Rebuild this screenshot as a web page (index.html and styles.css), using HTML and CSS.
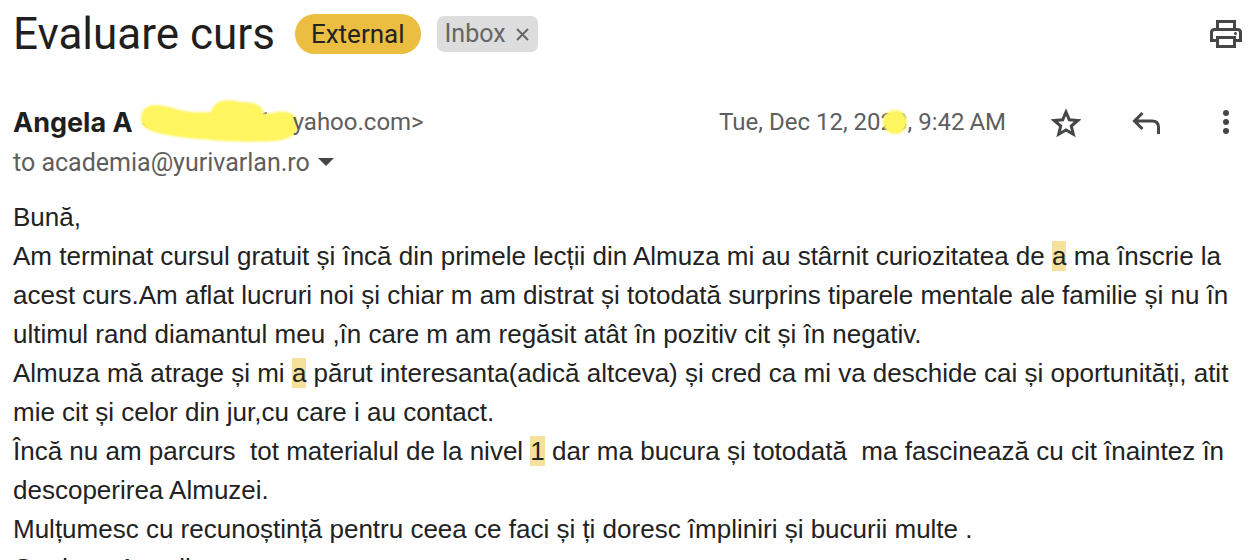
FILE: index.html
```html
<!DOCTYPE html>
<html lang="ro">
<head>
    <meta charset="UTF-8">
    <meta name="viewport" content="width=device-width, initial-scale=1.0">
    <title>Evaluare curs</title>
    <link rel="stylesheet" href="styles.css">
</head>
<body>
    <main class="message">
        <header class="subject-row">
            <h1 class="subject">Evaluare curs</h1>
            <span class="badge-external">External</span>
            <span class="badge-inbox">Inbox
                <button class="remove-btn" aria-label="Remove label Inbox">
                    <svg width="14" height="14" viewBox="0 0 14 14"><path d="M1 2l11 11M12 2L1 13" stroke="#666" stroke-width="2"/></svg>
                </button>
            </span>
            <button class="icon-btn print-btn" aria-label="Print all">
                <svg width="32" height="28" viewBox="0 0 32 28" fill="none" stroke="#444746" stroke-width="3">
                    <path d="M7.500 9V1.500h17V9"/>
                    <path d="M7.500 20.500h-6v-8q0-3 3-3h23q3 0 3 3v8h-6"/>
                    <path d="M7.500 17.500h17v9h-17z"/>
                    <circle cx="25.500" cy="13.500" r="1.500" fill="#444746" stroke="none"/>
                </svg>
            </button>
        </header>

        <section class="sender-row">
            <div class="sender">
                <span class="sender-name">Angela A</span>
                <!-- hidden part of the address -->
                <svg class="marker" width="160" height="44" viewBox="0 0 160 44">
                    <path d="M2 23l5 4M122 14l4-1" stroke="#5e5e5e" stroke-width="2" fill="none"/>
                    <path class="marker-shape" d="M14 5C5 5 0 11 0 19c0 9 9 13 26 16 16 3 32 4 44 5 18 2 48 2 63 1 16-1 24-7 24-17 0-9-10-14-20-12l-14 2c-2-9-8-12-24-12-14-4-26-2-29 10-18 1-30-1-38-4C24 6 19 5 14 5z" fill="#fff55f"/>
                </svg>
                <span class="sender-mail">yahoo.com&gt;</span>
            </div>
            <div class="actions">
                <span class="date">Tue, Dec 12, 20<span class="year">23<i class="dot"></i></span>, 9:42&#8201;AM</span>
                <button class="icon-btn" aria-label="Star">
                    <svg width="30" height="32" viewBox="0 0 30 32" fill="none" stroke="#444746" stroke-width="3"><path d="M15 6l3.300 7.800 8.400.7-6.400 5.500 2 8.200L15 23.900l-7.300 4.300 2-8.200-6.400-5.500 8.400-.7z"/></svg>
                </button>
                <button class="icon-btn" aria-label="Reply">
                    <svg width="30" height="30" viewBox="0 0 30 30" fill="none" stroke="#444746" stroke-width="3"><path d="M11.500 6L3.500 14l8 8M3.500 14H21q6.500 0 6.500 6.500V27"/></svg>
                </button>
                <button class="icon-btn" aria-label="More">
                    <svg width="6" height="26" viewBox="0 0 6 26" fill="#444746"><circle cx="3" cy="4" r="3"/><circle cx="3" cy="13" r="3"/><circle cx="3" cy="22" r="3"/></svg>
                </button>
            </div>
        </section>

        <div class="recipient">
            <span>to academia@yurivarlan.ro</span>
            <button class="icon-btn" aria-label="Show details">
                <svg width="16" height="8" viewBox="0 0 16 8"><path d="M0 0h16L8 8z" fill="#444746"/></svg>
            </button>
        </div>

        <article class="content">
            <p>Bună,</p>
            <p>Am terminat cursul gratuit și încă din primele lecții din Almuza mi au stârnit curiozitatea de <mark>a</mark> ma înscrie la acest curs.Am aflat lucruri noi și chiar m am distrat și totodată surprins tiparele mentale ale familie și nu în ultimul rand diamantul meu ,în care m am regăsit atât în pozitiv cit și în negativ.</p>
            <p>Almuza mă atrage și mi <mark>a</mark> părut interesanta(adică altceva) și cred ca mi va deschide cai și oportunități, atit mie cit și celor din jur,cu care i au contact.</p>
            <p>Încă nu am parcurs&nbsp; tot materialul de la nivel <mark>1</mark> dar ma bucura și totodată&nbsp; ma fascinează cu cit înaintez în descoperirea Almuzei.</p>
            <p>Mulțumesc cu recunoștință pentru ceea ce faci și ți doresc împliniri și bucurii multe .</p>
            <p>Cu drag, Angelica</p>
        </article>
    </main>
</body>
</html>
```
FILE: styles.css
```css
* {
    box-sizing: border-box;
}

body {
    margin: 0;
    height: 100vh;
    overflow: hidden;
    background-color: #fff;
    color: #222;
    font-family: Roboto, "Liberation Sans", sans-serif;
    font-size: 25px;
}

button {
    display: flex;
    padding: 0;
    border: none;
    background: none;
    cursor: pointer;
}

.message {
    padding: 8px 18px 0 13px;
}

.subject-row {
    display: flex;
    align-items: center;
    height: 52px;
}

.subject {
    margin: 0 20px 0 0;
    font-size: 44px;
    font-weight: 400;
    color: #1f1f1f;
}

.badge-external {
    padding: 0 16px;
    border-radius: 20px;
    background-color: #ebbe41;
    color: #222;
    font-size: 26px;
    line-height: 40px;
}

.badge-inbox {
    display: flex;
    align-items: center;
    gap: 10px;
    margin-left: 16px;
    padding: 0 8px;
    border-radius: 7px;
    background-color: #ddd;
    color: #666;
    line-height: 36px;
}

.print-btn {
    margin-left: auto;
}

.sender-row {
    display: flex;
    align-items: center;
    justify-content: space-between;
    height: 44px;
    margin: 40px 13px 0 0;
    color: #5e5e5e;
    font-size: 24px;
}

.sender {
    display: flex;
    align-items: center;
}

.sender-name {
    font-family: Inter, Roboto, sans-serif;
    font-size: 27px;
    font-weight: 700;
    color: #1f1f1f;
}

.marker {
    flex: none;
    margin: 0 -8px 0 8px;
    overflow: visible;
}

.marker-shape {
    filter: blur(1px);
}

.actions {
    display: flex;
    align-items: center;
}

.actions .icon-btn {
    margin-left: 50px;
}

.actions .date + .icon-btn {
    margin-left: 45px;
}

.actions .icon-btn:last-child {
    margin-left: 62px;
}

.date {
    white-space: nowrap;
}

.year {
    position: relative;
}

/* yellow spot over the year */
.dot {
    position: absolute;
    top: 2px;
    left: 2px;
    width: 24px;
    height: 24px;
    border-radius: 50%;
    background-color: #fff55f;
    filter: blur(1px);
}

.recipient {
    display: flex;
    align-items: center;
    gap: 8px;
    height: 36px;
    color: #5e5e5e;
}

.content {
    margin-top: 18px;
    font-family: "Liberation Sans", Arial, sans-serif;
    font-size: 26px;
    line-height: 39px;
}

.content p {
    margin: 0;
}

mark {
    background-color: #f5e19b;
    color: inherit;
}
```
